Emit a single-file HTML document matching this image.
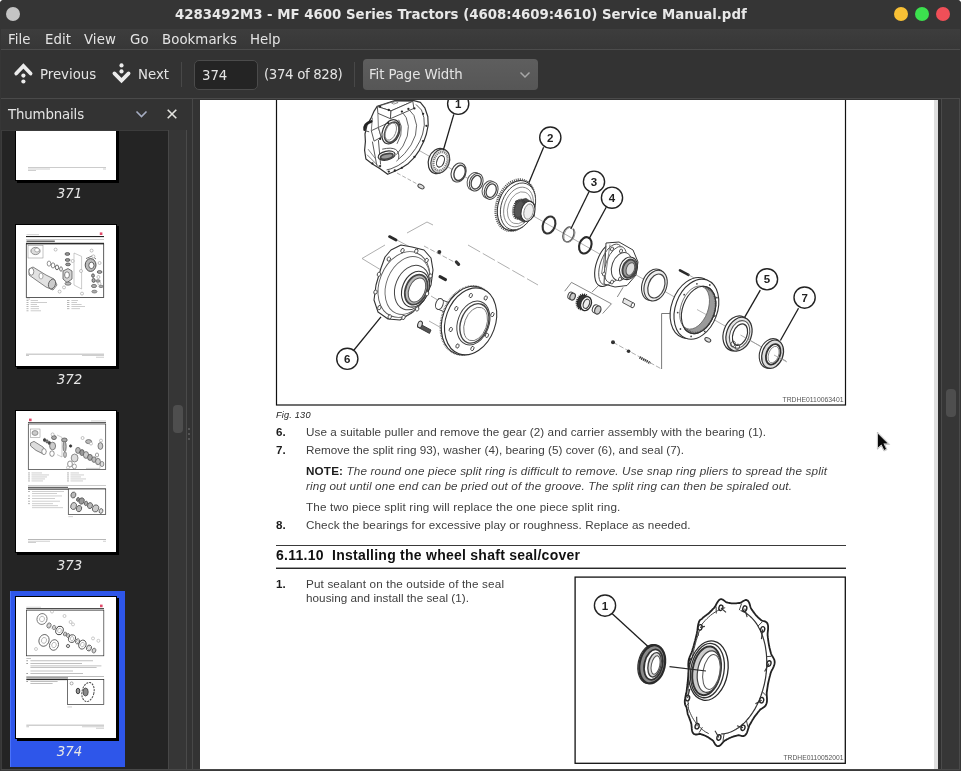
<!DOCTYPE html>
<html lang="en">
<head>
<meta charset="utf-8">
<title>4283492M3 - MF 4600 Series Tractors (4608:4609:4610) Service Manual.pdf</title>
<style>
html,body{margin:0;padding:0;}
body{width:961px;height:771px;overflow:hidden;background:#fff;font-family:"DejaVu Sans","Liberation Sans",sans-serif;font-size:13.33px;color:#e4e4e4;}
#win{will-change:transform;position:absolute;left:0;top:0;width:961px;height:771px;background:#333333;border-radius:4px 4px 0 0;overflow:hidden;}
.abs{position:absolute;}
#titlebar{left:0;top:0;width:961px;height:29px;background:#353535;}
#title{left:175px;top:0;height:29px;line-height:30px;font-weight:bold;font-size:13.33px;color:#e8e8e8;white-space:pre;}
.wbtn{position:absolute;width:14px;height:14px;border-radius:50%;top:7px;}
#menubar{left:1px;top:29px;width:959px;height:20px;background:linear-gradient(#3d3d3d,#373737);border-bottom:1px solid #4c4c4c;}
#menubar span{position:absolute;top:0;line-height:22px;letter-spacing:0.05px;white-space:pre;}
#toolbar{left:1px;top:50px;width:959px;height:48px;background:#333333;border-bottom:1px solid #4a4a4a;}
#toolbar .lbl{position:absolute;top:0;line-height:50px;letter-spacing:-0.03px;white-space:pre;}
.sep{position:absolute;top:12px;width:1px;height:25px;background:#484848;}
#pagebox{left:193px;top:10px;width:62px;height:28px;border:1px solid #4b4b4b;border-radius:5px;background:#242424;box-sizing:content-box;}
#pagebox span{position:absolute;left:7px;letter-spacing:-0.1px;top:0;line-height:30px;}
#combo{left:362px;top:9px;width:175px;height:31px;border-radius:4px;background:linear-gradient(#5e5e5e,#565656);}
#combo span{position:absolute;left:6px;top:0;line-height:31px;letter-spacing:-0.1px;}
/* sidebar */
#sidehead{left:1px;top:99px;width:191px;height:31px;background:#333333;}
#sidehead span{position:absolute;left:7px;top:0;line-height:32px;letter-spacing:-0.15px;}
#thumbs{left:1px;top:130px;width:167px;height:639px;background:#242424;overflow:hidden;border-top:1px solid #3c3c3c;border-left:1px solid #3c3c3c;box-sizing:border-box;}
.tlabel{position:absolute;width:120px;text-align:center;font-style:italic;font-size:13.33px;line-height:16px;color:#e6e6e6;}
.tpage{position:absolute;left:13px;width:100px;height:141px;background:#fff;border:1px solid #000;box-shadow:2px 2px 0 0 #000;}
#sscroll{left:168px;top:130px;width:19px;height:639px;background:#363636;border-left:1px solid #474747;border-right:1px solid #4a4a4a;box-sizing:border-box;}
#sthumb{left:173px;top:405px;width:10px;height:28px;border-radius:4px;background:#4e4e4e;}
.dot{position:absolute;left:188px;width:2px;height:2px;background:#555;}
#docborder{left:192px;top:99px;width:1px;height:670px;background:#484848;}
#page{left:200px;top:100px;width:734px;height:669px;background:#fff;overflow:hidden;color:#3a3a3a;font-family:"Liberation Sans",sans-serif;}
#pshadow{left:934px;top:100px;width:4px;height:669px;background:#dedede;}
#dgap{left:938px;top:100px;width:3px;height:669px;background:#2e2e2e;}
#dscroll{left:941px;top:99px;width:19px;height:671px;background:#363636;border-left:1px solid #4a4a4a;border-right:1px solid #4a4a4a;border-bottom:1px solid #4a4a4a;box-sizing:border-box;}
#dthumb{left:946px;top:389px;width:10px;height:28px;border-radius:4px;background:#4e4e4e;}
#bottom{left:0;top:769px;width:961px;height:2px;background:#3a3a3a;border-top:1px solid #484848;box-sizing:border-box;}
.edge{position:absolute;top:29px;width:1px;height:742px;background:#363636;}
/* doc text */
.t{position:absolute;white-space:pre;font-size:11.5px;line-height:14px;color:#3c3c3c;}
.b{font-weight:bold;color:#1a1a1a;}
.i{font-style:italic;}
.rule{position:absolute;left:76px;width:570px;height:1px;background:#222;}
</style>
</head>
<body>
<div id="win">
  <div id="titlebar" class="abs"></div>
  <div id="title" class="abs">4283492M3 - MF 4600 Series Tractors (4608:4609:4610) Service Manual.pdf</div>
  <div class="wbtn" style="left:6px;background:#c4c4c4"></div>
  <div class="wbtn" style="left:894px;background:#f8c035"></div>
  <div class="wbtn" style="left:915px;background:#3ce04e"></div>
  <div class="wbtn" style="left:936px;background:#f04f58"></div>

  <div id="menubar" class="abs">
    <span style="left:7px">File</span><span style="left:44px">Edit</span><span style="left:83px">View</span><span style="left:129px">Go</span><span style="left:161px">Bookmarks</span><span style="left:249px">Help</span>
  </div>

  <div id="toolbar" class="abs">
    <svg class="abs" style="left:-1px;top:-50px" width="140" height="98" viewBox="0 0 140 98"><g fill="none" stroke="#ececec" stroke-width="3.7" stroke-linecap="round" stroke-linejoin="miter"><path d="M16.2 73.6 L23.4 66 L30.6 73.6"/><path d="M114.4 73.4 L121.5 80.6 L128.6 73.4"/></g><g fill="#ececec"><circle cx="23.4" cy="75.6" r="2.1"/><circle cx="23.4" cy="81.5" r="2.1"/><circle cx="121.5" cy="65.4" r="2.1"/><circle cx="121.5" cy="71.4" r="2.1"/></g></svg>
    <span class="lbl" style="left:39px">Previous</span>
    <span class="lbl" style="left:137px">Next</span>
    <div class="sep" style="left:180px"></div>
    <div id="pagebox" class="abs"><span>374</span></div>
    <span class="lbl" style="left:263px;letter-spacing:-0.35px">(374 of 828)</span>
    <div class="sep" style="left:353px"></div>
    <div id="combo" class="abs"><span>Fit Page Width</span>
      <svg class="abs" style="left:156px;top:11px" width="12" height="10" viewBox="0 0 12 10"><path d="M1.5 2.5 L6 7 L10.5 2.5" fill="none" stroke="#a8a8a8" stroke-width="1.5"/></svg>
    </div>
  </div>

  <div id="sidehead" class="abs"><span>Thumbnails</span>
    <svg class="abs" style="left:134px;top:9px" width="13" height="12" viewBox="0 0 13 12"><path d="M1.5 3.5 L6.5 8.5 L11.5 3.5" fill="none" stroke="#a6adc2" stroke-width="1.6"/></svg>
    <svg class="abs" style="left:165px;top:9px" width="12" height="12" viewBox="0 0 12 12"><path d="M1.7 1.7 L10.3 10.3 M10.3 1.7 L1.7 10.3" fill="none" stroke="#e4e4e0" stroke-width="1.6"/></svg>
  </div>
  <div id="thumbs" class="abs">
<div class="abs" style="left:8px;top:460px;width:115px;height:176px;background:#2e56ea;box-shadow:inset 1px 0 0 #4a72fa"></div>
<div class="tpage" style="top:-93px"><svg class="abs" style="left:0;top:0" width="100" height="141" viewBox="0 0 100 141">
<rect x="12" y="128" width="78" height="0.6" fill="#aaa"/>
<rect x="12" y="129.6" width="22" height="0.8" fill="#c4c4c4"/>
<rect x="12" y="131" width="8" height="0.8" fill="#c4c4c4"/>
<rect x="87" y="129.6" width="3" height="0.8" fill="#c4c4c4"/>
</svg></div>
<div class="tlabel" style="left:7.5px;top:55px">371</div>
<div class="tpage" style="top:93px"><svg class="abs" style="left:0;top:0" width="100" height="141" viewBox="0 0 100 141">
<rect x="83.8" y="7.4" width="2.6" height="2.6" fill="#e24a6a"/>
<rect x="10.5" y="9.4" width="12.5" height="0.7" fill="#c0c0c0"/>
<rect x="10" y="11" width="78" height="1.1" fill="#222"/>
<rect x="10" y="14.3" width="78" height="0.5" fill="#999"/>
<rect x="10.5" y="15.6" width="28.299999999999997" height="1.2" fill="#444"/>
<rect x="10" y="17.8" width="78" height="1.1" fill="#111"/>
<rect x="10.3" y="19" width="77.4" height="53.4" fill="#fff" stroke="#333" stroke-width="0.8"/>
<rect x="12" y="20.4" width="15" height="12.6" fill="#fff" stroke="#888" stroke-width="0.5"/>
<ellipse cx="19.5" cy="26" rx="4.6" ry="3.6" fill="#ddd" stroke="#777" stroke-width="0.8"/>
<ellipse cx="21" cy="25" rx="2.4" ry="2" fill="#fff" stroke="#888" stroke-width="0.6"/>
<path d="M13 44 L17 42 L30 50 L38 54 L41 60 L37 65 L30 62 L20 55 L13 50 Z" fill="#e2e2e2" stroke="#666" stroke-width="0.8"/>
<ellipse cx="15.4" cy="46.6" rx="2.4" ry="3.6" fill="#fff" stroke="#666" stroke-width="0.7"/>
<ellipse cx="36" cy="59" rx="3.4" ry="5" fill="#ccc" stroke="#555" stroke-width="0.8" transform="rotate(20 36 59)"/>
<ellipse cx="25" cy="51" rx="2" ry="3" fill="#fff" stroke="#777" stroke-width="0.6"/>
<ellipse cx="33" cy="38.6" rx="1.8" ry="2.6" fill="none" stroke="#777" stroke-width="0.8"/>
<ellipse cx="37" cy="40.4" rx="1.8" ry="2.6" fill="none" stroke="#666" stroke-width="0.8"/>
<ellipse cx="41" cy="42.4" rx="1.6" ry="2.4" fill="none" stroke="#444" stroke-width="0.8"/>
<ellipse cx="45" cy="44" rx="1.4" ry="2.2" fill="none" stroke="#555" stroke-width="0.8"/>
<path d="M47 46 L52 43.6 L56 46 L56 54 L51 57.6 L47 54 Z" fill="#d4d4d4" stroke="#555" stroke-width="0.8"/>
<ellipse cx="51" cy="50" rx="2.4" ry="3.2" fill="#fff" stroke="#555" stroke-width="0.7"/>
<ellipse cx="52" cy="58.6" rx="3" ry="1.6" fill="#bbb" stroke="#555" stroke-width="0.7"/>
<ellipse cx="51.4" cy="29" rx="2.4" ry="1.4" fill="#999" stroke="#444" stroke-width="0.7"/>
<ellipse cx="51.6" cy="35" rx="2.4" ry="1.4" fill="#999" stroke="#444" stroke-width="0.7"/>
<ellipse cx="52" cy="39.4" rx="2.4" ry="1.4" fill="#999" stroke="#444" stroke-width="0.7"/>
<path d="M58 28 L65.6 31.4 L65.6 64 L58 60 Z" fill="none" stroke="#999" stroke-width="0.5"/>
<ellipse cx="74.6" cy="40" rx="5.4" ry="6.4" fill="#bbb" stroke="#444" stroke-width="0.9"/>
<ellipse cx="75.4" cy="40.4" rx="2.6" ry="3.2" fill="#fff" stroke="#444" stroke-width="0.8"/>
<path d="M70 33.6 L76 31 L80 34" fill="none" stroke="#555" stroke-width="0.8"/>
<ellipse cx="77" cy="50.6" rx="1.4" ry="1.8" fill="#aaa" stroke="#333" stroke-width="0.7"/>
<ellipse cx="77.6" cy="55.4" rx="1.6" ry="2" fill="#aaa" stroke="#333" stroke-width="0.7"/>
<ellipse cx="78" cy="61" rx="2.6" ry="1.6" fill="#aaa" stroke="#555" stroke-width="0.7"/>
<ellipse cx="78.4" cy="66.6" rx="2.6" ry="1.4" fill="#aaa" stroke="#666" stroke-width="0.7"/>
<ellipse cx="83.6" cy="47" rx="2.4" ry="1.4" fill="#aaa" stroke="#444" stroke-width="0.7"/>
<ellipse cx="82" cy="56" rx="2.2" ry="1.3" fill="#aaa" stroke="#666" stroke-width="0.7"/>
<ellipse cx="85" cy="61.4" rx="2" ry="1.2" fill="#aaa" stroke="#666" stroke-width="0.7"/>
<circle cx="39.6" cy="24.6" r="1.5" fill="#fff" stroke="#888" stroke-width="0.5"/>
<circle cx="56.6" cy="36" r="1.5" fill="#fff" stroke="#888" stroke-width="0.5"/>
<circle cx="75.6" cy="25.6" r="1.5" fill="#fff" stroke="#888" stroke-width="0.5"/>
<circle cx="77.4" cy="31.4" r="1.5" fill="#fff" stroke="#888" stroke-width="0.5"/>
<circle cx="83.6" cy="38" r="1.5" fill="#fff" stroke="#888" stroke-width="0.5"/>
<circle cx="65" cy="46" r="1.5" fill="#fff" stroke="#888" stroke-width="0.5"/>
<circle cx="82.4" cy="52" r="1.5" fill="#fff" stroke="#888" stroke-width="0.5"/>
<circle cx="83.4" cy="58.6" r="1.5" fill="#fff" stroke="#888" stroke-width="0.5"/>
<circle cx="43.6" cy="66.6" r="1.5" fill="#fff" stroke="#888" stroke-width="0.5"/>
<circle cx="66" cy="68.6" r="1.5" fill="#fff" stroke="#888" stroke-width="0.5"/>
<circle cx="48" cy="62.4" r="1.5" fill="#fff" stroke="#888" stroke-width="0.5"/>
<rect x="10.5" y="73.6" width="3.5" height="0.7" fill="#aaa"/>
<rect x="10.5" y="75.0" width="2.0" height="0.7" fill="#999"/>
<rect x="14.6" y="75.0" width="7.4" height="0.7" fill="#b8b8b8"/>
<rect x="10.5" y="77.1" width="2.0" height="0.7" fill="#999"/>
<rect x="14.6" y="77.1" width="16.4" height="0.7" fill="#b8b8b8"/>
<rect x="10.5" y="79.2" width="2.0" height="0.7" fill="#999"/>
<rect x="14.6" y="79.2" width="6.4" height="0.7" fill="#b8b8b8"/>
<rect x="10.5" y="81.3" width="2.0" height="0.7" fill="#999"/>
<rect x="14.6" y="81.3" width="8.4" height="0.7" fill="#b8b8b8"/>
<rect x="10.5" y="83.4" width="2.0" height="0.7" fill="#999"/>
<rect x="14.6" y="83.4" width="8.4" height="0.7" fill="#b8b8b8"/>
<rect x="10.5" y="85.5" width="2.0" height="0.7" fill="#999"/>
<rect x="14.6" y="85.5" width="10.4" height="0.7" fill="#b8b8b8"/>
<rect x="51" y="75.0" width="2.3999999999999986" height="0.7" fill="#999"/>
<rect x="55.4" y="75.0" width="6.600000000000001" height="0.7" fill="#b8b8b8"/>
<rect x="51" y="77.1" width="2.3999999999999986" height="0.7" fill="#999"/>
<rect x="55.4" y="77.1" width="5.600000000000001" height="0.7" fill="#b8b8b8"/>
<rect x="51" y="79.2" width="2.3999999999999986" height="0.7" fill="#999"/>
<rect x="55.4" y="79.2" width="10.199999999999996" height="0.7" fill="#b8b8b8"/>
<rect x="51" y="81.3" width="2.3999999999999986" height="0.7" fill="#999"/>
<rect x="55.4" y="81.3" width="13.600000000000001" height="0.7" fill="#b8b8b8"/>
<rect x="51" y="83.4" width="2.3999999999999986" height="0.7" fill="#999"/>
<rect x="55.4" y="83.4" width="8.600000000000001" height="0.7" fill="#b8b8b8"/>
<rect x="10" y="128.8" width="78" height="0.6" fill="#888"/>
<rect x="10" y="130.2" width="3" height="0.8" fill="#bbb"/>
<rect x="66" y="130.2" width="22" height="0.8" fill="#c4c4c4"/>
<rect x="80" y="131.8" width="8" height="0.8" fill="#c4c4c4"/>
</svg></div>
<div class="tlabel" style="left:7.5px;top:241px">372</div>
<div class="tpage" style="top:279px"><svg class="abs" style="left:0;top:0" width="100" height="141" viewBox="0 0 100 141">
<rect x="13" y="7.6" width="2.6" height="2.6" fill="#e24a6a"/>
<rect x="75" y="9.6" width="15" height="0.7" fill="#c0c0c0"/>
<rect x="12" y="11.2" width="78" height="0.9" fill="#333"/>
<rect x="12.3" y="13" width="77.4" height="45.6" fill="#fff" stroke="#333" stroke-width="0.7"/>
<rect x="14.4" y="18" width="9.6" height="8.6" fill="#fff" stroke="#888" stroke-width="0.5"/>
<ellipse cx="19" cy="22" rx="3" ry="2.4" fill="#ccc" stroke="#777" stroke-width="0.7"/>
<path d="M14.6 32 L18 30.4 L27 36 L30 40.6 L27.4 43 L20 39.4 L14.6 35 Z" fill="#ddd" stroke="#666" stroke-width="0.8"/>
<ellipse cx="28" cy="40.6" rx="2.2" ry="3" fill="#fff" stroke="#666" stroke-width="0.7"/>
<ellipse cx="28.6" cy="29" rx="1.2" ry="1.6" fill="#444" stroke="#333" stroke-width="0.7"/>
<ellipse cx="31" cy="30.4" rx="1.2" ry="1.6" fill="#888" stroke="#444" stroke-width="0.7"/>
<ellipse cx="33.4" cy="32" rx="1.2" ry="1.6" fill="#444" stroke="#333" stroke-width="0.7"/>
<ellipse cx="36.6" cy="35" rx="3" ry="3.8" fill="#ccc" stroke="#555" stroke-width="0.7"/>
<ellipse cx="38" cy="26.6" rx="2.4" ry="2" fill="#aaa" stroke="#444" stroke-width="0.7"/>
<ellipse cx="36" cy="42.6" rx="2.2" ry="2.8" fill="#fff" stroke="#666" stroke-width="0.7"/>
<ellipse cx="48.4" cy="29" rx="2.8" ry="2" fill="#aaa" stroke="#444" stroke-width="0.7"/>
<ellipse cx="48.6" cy="35.6" rx="1.6" ry="5" fill="#bbb" stroke="#555" stroke-width="0.7"/>
<ellipse cx="49" cy="43.6" rx="1.4" ry="3" fill="#ccc" stroke="#666" stroke-width="0.7"/>
<ellipse cx="54.6" cy="35" rx="1.2" ry="1.2" fill="#333" stroke="#333" stroke-width="0.7"/>
<ellipse cx="58.6" cy="47" rx="3.4" ry="4" fill="#ddd" stroke="#666" stroke-width="0.7"/>
<ellipse cx="54" cy="53" rx="2.4" ry="3" fill="#fff" stroke="#666" stroke-width="0.7"/>
<ellipse cx="58.4" cy="55.4" rx="2" ry="2.4" fill="#fff" stroke="#777" stroke-width="0.7"/>
<ellipse cx="62" cy="39.4" rx="2.4" ry="3" fill="#bbb" stroke="#555" stroke-width="0.7"/>
<ellipse cx="66" cy="41.6" rx="2.2" ry="3" fill="#999" stroke="#444" stroke-width="0.7"/>
<ellipse cx="70" cy="44" rx="2.6" ry="3.4" fill="#ccc" stroke="#555" stroke-width="0.7"/>
<ellipse cx="74" cy="46.4" rx="2.4" ry="3" fill="#aaa" stroke="#444" stroke-width="0.7"/>
<ellipse cx="78" cy="48.6" rx="2.2" ry="2.8" fill="#bbb" stroke="#555" stroke-width="0.7"/>
<ellipse cx="82" cy="50.6" rx="2.4" ry="3.2" fill="#ccc" stroke="#555" stroke-width="0.7"/>
<ellipse cx="86" cy="53" rx="1.8" ry="2.6" fill="#ddd" stroke="#666" stroke-width="0.7"/>
<ellipse cx="72.6" cy="30.6" rx="3" ry="2" fill="#bbb" stroke="#555" stroke-width="0.7"/>
<ellipse cx="84.4" cy="35" rx="2.4" ry="3.4" fill="#ccc" stroke="#555" stroke-width="0.7"/>
<ellipse cx="81" cy="44" rx="1.6" ry="2" fill="#fff" stroke="#777" stroke-width="0.7"/>
<path d="M41 24 L46 26.4 L46 46 L41 43.6" fill="none" stroke="#999" stroke-width="0.5"/>
<path d="M62 42 L84 54 L84 57.4 L70 57.4" fill="none" stroke="#999" stroke-width="0.5"/>
<circle cx="36.6" cy="23.4" r="1.5" fill="#fff" stroke="#888" stroke-width="0.5"/>
<circle cx="66.6" cy="27" r="1.5" fill="#fff" stroke="#888" stroke-width="0.5"/>
<circle cx="75" cy="32.6" r="1.5" fill="#fff" stroke="#888" stroke-width="0.5"/>
<circle cx="85" cy="29.6" r="1.5" fill="#fff" stroke="#888" stroke-width="0.5"/>
<circle cx="52" cy="56.6" r="1.5" fill="#fff" stroke="#888" stroke-width="0.5"/>
<rect x="12" y="61.6" width="2" height="0.7" fill="#999"/>
<rect x="15.5" y="61.6" width="10.5" height="0.7" fill="#bbb"/>
<rect x="51" y="61.6" width="2" height="0.7" fill="#999"/>
<rect x="54.5" y="61.6" width="8.5" height="0.7" fill="#bbb"/>
<rect x="12" y="63.6" width="2" height="0.7" fill="#999"/>
<rect x="15.5" y="63.6" width="17.5" height="0.7" fill="#bbb"/>
<rect x="51" y="63.6" width="2" height="0.7" fill="#999"/>
<rect x="54.5" y="63.6" width="13.5" height="0.7" fill="#bbb"/>
<rect x="12" y="65.6" width="2" height="0.7" fill="#999"/>
<rect x="15.5" y="65.6" width="15.5" height="0.7" fill="#bbb"/>
<rect x="51" y="65.6" width="2" height="0.7" fill="#999"/>
<rect x="54.5" y="65.6" width="10.5" height="0.7" fill="#bbb"/>
<rect x="12" y="67.6" width="2" height="0.7" fill="#999"/>
<rect x="15.5" y="67.6" width="13.5" height="0.7" fill="#bbb"/>
<rect x="51" y="67.6" width="2" height="0.7" fill="#999"/>
<rect x="54.5" y="67.6" width="15.5" height="0.7" fill="#bbb"/>
<rect x="12" y="69.6" width="2" height="0.7" fill="#999"/>
<rect x="15.5" y="69.6" width="11.5" height="0.7" fill="#bbb"/>
<rect x="51" y="69.6" width="2" height="0.7" fill="#999"/>
<rect x="54.5" y="69.6" width="12.5" height="0.7" fill="#bbb"/>
<rect x="12" y="74.4" width="78" height="0.5" fill="#999"/>
<rect x="12" y="75.8" width="40" height="1.1" fill="#555"/>
<rect x="12" y="77.6" width="78" height="1" fill="#222"/>
<rect x="52.3" y="78" width="37.4" height="25.4" fill="#fff" stroke="#333" stroke-width="0.7"/>
<ellipse cx="57.4" cy="84" rx="2.4" ry="3" fill="#bbb" stroke="#555" stroke-width="0.8" transform="rotate(20 57.4 84)"/>
<ellipse cx="62" cy="88.4" rx="1.4" ry="2" fill="#888" stroke="#555" stroke-width="0.8" transform="rotate(20 62 88.4)"/>
<ellipse cx="65.6" cy="90" rx="2.6" ry="3.2" fill="#999" stroke="#555" stroke-width="0.8" transform="rotate(20 65.6 90)"/>
<ellipse cx="70" cy="92.4" rx="1.6" ry="2.2" fill="#aaa" stroke="#555" stroke-width="0.8" transform="rotate(20 70 92.4)"/>
<ellipse cx="74" cy="94.6" rx="2.4" ry="3" fill="#bbb" stroke="#555" stroke-width="0.8" transform="rotate(20 74 94.6)"/>
<ellipse cx="79.6" cy="97.4" rx="3" ry="3.6" fill="#ccc" stroke="#555" stroke-width="0.8" transform="rotate(20 79.6 97.4)"/>
<ellipse cx="85" cy="100" rx="1.8" ry="2.4" fill="#ddd" stroke="#555" stroke-width="0.8" transform="rotate(20 85 100)"/>
<ellipse cx="57.6" cy="95" rx="2.8" ry="3.6" fill="#ccc" stroke="#555" stroke-width="0.8" transform="rotate(20 57.6 95)"/>
<ellipse cx="63" cy="97.6" rx="2.6" ry="3.2" fill="#bbb" stroke="#555" stroke-width="0.8" transform="rotate(20 63 97.6)"/>
<rect x="12" y="80" width="2" height="0.7" fill="#999"/>
<rect x="16" y="80" width="32" height="0.7" fill="#bbb"/>
<rect x="16" y="82" width="25" height="0.7" fill="#bbb"/>
<rect x="12" y="84.6" width="2" height="0.7" fill="#999"/>
<rect x="16" y="84.6" width="30" height="0.7" fill="#bbb"/>
<rect x="12" y="87.2" width="2" height="0.7" fill="#999"/>
<rect x="16" y="87.2" width="23" height="0.7" fill="#bbb"/>
<rect x="12" y="89.8" width="2" height="0.7" fill="#999"/>
<rect x="16" y="89.8" width="28" height="0.7" fill="#bbb"/>
<rect x="12" y="92.4" width="2" height="0.7" fill="#999"/>
<rect x="16" y="92.4" width="21" height="0.7" fill="#bbb"/>
<rect x="16" y="94.4" width="26" height="0.7" fill="#bbb"/>
<rect x="16" y="96.4" width="31" height="0.7" fill="#bbb"/>
<rect x="52.3" y="105.4" width="4.700000000000003" height="0.7" fill="#bbb"/>
<rect x="12" y="128.2" width="78" height="0.6" fill="#888"/>
<rect x="12" y="129.8" width="22" height="0.8" fill="#c4c4c4"/>
<rect x="12" y="131.2" width="8" height="0.8" fill="#c4c4c4"/>
<rect x="87" y="129.8" width="3" height="0.8" fill="#c4c4c4"/>
</svg></div>
<div class="tlabel" style="left:7.5px;top:427px">373</div>
<div class="tpage" style="top:465px"><svg class="abs" style="left:0;top:0" width="100" height="141" viewBox="0 0 100 141">
<rect x="84" y="7.6" width="2.6" height="2.6" fill="#e24a6a"/>
<rect x="10.3" y="9.8" width="14.7" height="0.7" fill="#c0c0c0"/>
<rect x="10.3" y="11.2" width="77.7" height="1" fill="#222"/>
<rect x="10.6" y="13.2" width="77.2" height="45.6" fill="#fff" stroke="#333" stroke-width="0.7"/>
<ellipse cx="26" cy="22" rx="5" ry="5.5" fill="none" stroke="#777" stroke-width="0.9" transform="rotate(20 26 22)"/>
<ellipse cx="26" cy="22" rx="2.5" ry="2.75" fill="none" stroke="#999" stroke-width="0.6" transform="rotate(20 26 22)"/>
<ellipse cx="33" cy="28.5" rx="2" ry="2.6" fill="none" stroke="#666" stroke-width="0.9" transform="rotate(20 33 28.5)"/>
<ellipse cx="33" cy="28.5" rx="1.0" ry="1.3" fill="none" stroke="#999" stroke-width="0.6" transform="rotate(20 33 28.5)"/>
<ellipse cx="38" cy="30.5" rx="1.6" ry="2.2" fill="none" stroke="#777" stroke-width="0.9" transform="rotate(20 38 30.5)"/>
<ellipse cx="38" cy="30.5" rx="0.8" ry="1.1" fill="none" stroke="#999" stroke-width="0.6" transform="rotate(20 38 30.5)"/>
<ellipse cx="43.5" cy="33.5" rx="3.6" ry="4.4" fill="none" stroke="#444" stroke-width="0.9" transform="rotate(20 43.5 33.5)"/>
<ellipse cx="43.5" cy="33.5" rx="1.8" ry="2.2" fill="none" stroke="#999" stroke-width="0.6" transform="rotate(20 43.5 33.5)"/>
<ellipse cx="49" cy="37" rx="1.4" ry="2" fill="none" stroke="#666" stroke-width="0.9" transform="rotate(20 49 37)"/>
<ellipse cx="49" cy="37" rx="0.7" ry="1.0" fill="none" stroke="#999" stroke-width="0.6" transform="rotate(20 49 37)"/>
<ellipse cx="52" cy="38.5" rx="1.4" ry="2" fill="none" stroke="#666" stroke-width="0.9" transform="rotate(20 52 38.5)"/>
<ellipse cx="52" cy="38.5" rx="0.7" ry="1.0" fill="none" stroke="#999" stroke-width="0.6" transform="rotate(20 52 38.5)"/>
<ellipse cx="56" cy="41.6" rx="3.4" ry="4" fill="none" stroke="#555" stroke-width="0.9" transform="rotate(20 56 41.6)"/>
<ellipse cx="56" cy="41.6" rx="1.7" ry="2.0" fill="none" stroke="#999" stroke-width="0.6" transform="rotate(20 56 41.6)"/>
<ellipse cx="61.6" cy="44.4" rx="2" ry="2.6" fill="none" stroke="#666" stroke-width="0.9" transform="rotate(20 61.6 44.4)"/>
<ellipse cx="61.6" cy="44.4" rx="1.0" ry="1.3" fill="none" stroke="#999" stroke-width="0.6" transform="rotate(20 61.6 44.4)"/>
<ellipse cx="66.4" cy="47.6" rx="3.6" ry="4.6" fill="none" stroke="#555" stroke-width="0.9" transform="rotate(20 66.4 47.6)"/>
<ellipse cx="66.4" cy="47.6" rx="1.8" ry="2.3" fill="none" stroke="#999" stroke-width="0.6" transform="rotate(20 66.4 47.6)"/>
<ellipse cx="73" cy="51" rx="2.4" ry="3" fill="none" stroke="#555" stroke-width="0.9" transform="rotate(20 73 51)"/>
<ellipse cx="73" cy="51" rx="1.2" ry="1.5" fill="none" stroke="#999" stroke-width="0.6" transform="rotate(20 73 51)"/>
<ellipse cx="78" cy="53.6" rx="1.8" ry="2.4" fill="none" stroke="#666" stroke-width="0.9" transform="rotate(20 78 53.6)"/>
<ellipse cx="78" cy="53.6" rx="0.9" ry="1.2" fill="none" stroke="#999" stroke-width="0.6" transform="rotate(20 78 53.6)"/>
<ellipse cx="28" cy="43.4" rx="5" ry="6" fill="none" stroke="#666" stroke-width="0.9" transform="rotate(20 28 43.4)"/>
<ellipse cx="28" cy="43.4" rx="2.5" ry="3.0" fill="none" stroke="#999" stroke-width="0.6" transform="rotate(20 28 43.4)"/>
<ellipse cx="38" cy="48" rx="4.4" ry="5.4" fill="none" stroke="#666" stroke-width="0.9" transform="rotate(20 38 48)"/>
<ellipse cx="38" cy="48" rx="2.2" ry="2.7" fill="none" stroke="#999" stroke-width="0.6" transform="rotate(20 38 48)"/>
<ellipse cx="52" cy="49" rx="1.6" ry="1.6" fill="none" stroke="#444" stroke-width="0.9" transform="rotate(20 52 49)"/>
<ellipse cx="52" cy="49" rx="0.8" ry="0.8" fill="none" stroke="#999" stroke-width="0.6" transform="rotate(20 52 49)"/>
<circle cx="36" cy="14.6" r="1.5" fill="none" stroke="#999" stroke-width="0.5"/>
<circle cx="48.5" cy="19" r="1.5" fill="none" stroke="#999" stroke-width="0.5"/>
<circle cx="54.6" cy="25" r="1.5" fill="none" stroke="#999" stroke-width="0.5"/>
<circle cx="57" cy="27.4" r="1.5" fill="none" stroke="#999" stroke-width="0.5"/>
<circle cx="77" cy="41.4" r="1.5" fill="none" stroke="#999" stroke-width="0.5"/>
<circle cx="82.4" cy="43.8" r="1.5" fill="none" stroke="#999" stroke-width="0.5"/>
<circle cx="20" cy="52" r="1.5" fill="none" stroke="#999" stroke-width="0.5"/>
<rect x="10.3" y="61.2" width="4.699999999999999" height="0.7" fill="#aaa"/>
<rect x="10.3" y="63.4" width="1.6999999999999993" height="0.8" fill="#888"/>
<rect x="14.4" y="63.4" width="62.6" height="0.8" fill="#b0b0b0"/>
<rect x="10.3" y="66" width="1.6999999999999993" height="0.8" fill="#888"/>
<rect x="14.4" y="66" width="51.6" height="0.8" fill="#b0b0b0"/>
<rect x="14.4" y="68.5" width="71.0" height="0.8" fill="#b4b4b4"/>
<rect x="14.4" y="70" width="66.19999999999999" height="0.8" fill="#b4b4b4"/>
<rect x="14.4" y="73.6" width="42.6" height="0.8" fill="#b4b4b4"/>
<rect x="10.3" y="76.2" width="1.6999999999999993" height="0.8" fill="#888"/>
<rect x="14.4" y="76.2" width="52.6" height="0.8" fill="#b0b0b0"/>
<rect x="10.3" y="79.3" width="77.7" height="0.5" fill="#777"/>
<rect x="10.3" y="80.5" width="41.7" height="0.9" fill="#444"/>
<rect x="10.3" y="82.1" width="77.7" height="1" fill="#111"/>
<rect x="51.4" y="82.4" width="36.4" height="25.2" fill="#fff" stroke="#333" stroke-width="0.7"/>
<ellipse cx="72" cy="95" rx="6" ry="9.6" fill="none" stroke="#444" stroke-width="1" stroke-dasharray="2 1" transform="rotate(12 72 95)"/>
<ellipse cx="69.6" cy="95" rx="2.6" ry="4" fill="#888" stroke="#444" stroke-width="0.8"/>
<ellipse cx="62" cy="94" rx="1.8" ry="2.8" fill="#999" stroke="#333" stroke-width="0.9"/>
<circle cx="55.6" cy="86.4" r="1.5" fill="none" stroke="#777" stroke-width="0.6"/>
<rect x="10.3" y="84" width="1.6999999999999993" height="0.8" fill="#888"/>
<rect x="14.4" y="84" width="27.200000000000003" height="0.8" fill="#b0b0b0"/>
<rect x="14.4" y="86" width="22.200000000000003" height="0.8" fill="#b0b0b0"/>
<rect x="51.4" y="109.6" width="4.600000000000001" height="0.7" fill="#bbb"/>
<rect x="10.3" y="127.8" width="77.7" height="0.6" fill="#888"/>
<rect x="10.3" y="129.4" width="2.6999999999999993" height="0.8" fill="#bbb"/>
<rect x="66" y="129.4" width="22" height="0.8" fill="#c4c4c4"/>
<rect x="80" y="130.8" width="8" height="0.8" fill="#c4c4c4"/>
</svg></div>
<div class="tlabel" style="left:7.5px;top:613px">374</div>
  </div>
  <div id="sscroll" class="abs"></div>
  <div id="sthumb" class="abs"></div>
  <div class="dot" style="top:428px"></div><div class="dot" style="top:433px"></div><div class="dot" style="top:438px"></div>
  <div id="docborder" class="abs"></div>

  <div id="page" class="abs">
<svg class="abs" style="left:0;top:0" width="734" height="669" viewBox="200 100 734 669">
<rect x="276.5" y="90.5" width="569" height="314.5" fill="#fff" stroke="#111" stroke-width="1.2"/>
<filter id="soft" x="-5%" y="-5%" width="110%" height="110%"><feGaussianBlur stdDeviation="0.45"/></filter>
<g filter="url(#soft)">
<line x1="401" y1="140" x2="786" y2="361" stroke="#9a9a9a" stroke-width="0.8"/>
<line x1="397" y1="173" x2="419" y2="185" stroke="#9a9a9a" stroke-width="0.8" stroke-dasharray="4 2"/>
<path d="M407 233 L427 222 L433 225" fill="none" stroke="#9a9a9a" stroke-width="0.8" stroke-linejoin="round"/>
<path d="M385 245 L362 258.5 L381 270" fill="none" stroke="#9a9a9a" stroke-width="0.8" stroke-linejoin="round"/>
<line x1="468" y1="245" x2="538" y2="285" stroke="#9a9a9a" stroke-width="0.8" stroke-dasharray="14 3"/>
<line x1="431" y1="296" x2="446" y2="305" stroke="#9a9a9a" stroke-width="0.8"/>
<line x1="445" y1="330" x2="429" y2="321" stroke="#9a9a9a" stroke-width="0.8"/>
<line x1="424" y1="246" x2="458" y2="264" stroke="#9a9a9a" stroke-width="0.8" stroke-dasharray="5 2"/>
<line x1="395" y1="239" x2="410" y2="247" stroke="#9a9a9a" stroke-width="0.8"/>
<path d="M564.7 291.2 L571.5 282.4 L611.4 303.8 L602.7 313.5" fill="none" stroke="#6a6a6a" stroke-width="0.8" stroke-linejoin="round"/>
<path d="M592 292.1 L602.7 281.4" fill="none" stroke="#6a6a6a" stroke-width="0.8" stroke-linejoin="round"/>
<path d="M617.3 297 L623.1 287.3" fill="none" stroke="#6a6a6a" stroke-width="0.8" stroke-linejoin="round"/>
<path d="M669.8 313.5 L661.6 313.5 L661.6 369" fill="none" stroke="#6a6a6a" stroke-width="0.9" stroke-linejoin="round"/>
<line x1="613" y1="342.3" x2="661.6" y2="369" stroke="#9a9a9a" stroke-width="0.8" stroke-dasharray="5 2"/>
<clipPath id="cpv"><rect x="276" y="100" width="570" height="305"/></clipPath>
<g clip-path="url(#cpv)">
<path d="M377.3 106.2 L395.3 100.4 L413.9 100.7 L420.4 102.4 L424.8 107.8 L427.8 116.5 L428.2 125.2 L426.4 134 L423.7 141.6 L419.3 150.3 L414.4 157.4 L408.4 163.4 L401.9 167.8 L394.8 171.2 L387.7 174.3 L380.1 168.8 L372.4 163.9 L365.9 159 L364.6 150.3 L365.4 141.6 L365 134 L367 125.2 L371.3 117.6 L374.1 111.1 Z" fill="#fff" stroke="#333" stroke-width="1.2" stroke-linejoin="round"/>
<path d="M416 104.5 L421.5 110 L423.9 117.6 L424.3 125.2 L422.6 134 L419.9 141.1 L415.5 148.7 L410.6 155.2 L404.6 161.2 L398.1 165.6 L391 168.8 L386.6 169.9" fill="none" stroke="#444" stroke-width="0.9" stroke-linejoin="round"/>
<path d="M401.9 111.6 L406.2 117.6 L408.4 126.3 L407.3 136.1 L403 146 L396.4 154.7" fill="none" stroke="#555" stroke-width="0.9"/>
<path d="M408.4 108.9 L413.9 115.4 L416.6 125.2 L415.5 135.1 L411.1 144.9 L404.6 153.6 L396.4 161.2" fill="none" stroke="#555" stroke-width="0.9"/>
<path d="M398.6 119.8 L401.3 126.3 L400.8 135.1 L397 143.8" fill="none" stroke="#555" stroke-width="0.9"/>
<path d="M377.3 106.5 L394.8 101.1 L412.8 101.3 L391 110.9 Z" fill="#fff" stroke="#444" stroke-width="0.9" stroke-linejoin="round"/>
<path d="M377.3 106.5 L391 110.9 L390.4 118.7 L377.9 113.3 Z" fill="#fff" stroke="#444" stroke-width="0.9" stroke-linejoin="round"/>
<path d="M391 110.9 L412.8 101.3 L413.9 108.4 L390.4 118.7 Z" fill="#fff" stroke="#444" stroke-width="0.9" stroke-linejoin="round"/>
<path d="M391.5 102.9 L395.9 101.5 L398.1 102.6 L393.7 104.1 Z" fill="#fff" stroke="#666" stroke-width="0.7" stroke-linejoin="round"/>
<path d="M371.3 130.7 L378.4 127.4 L381.2 137.2 L374.1 141.1 Z" fill="#fff" stroke="#444" stroke-width="0.9" stroke-linejoin="round"/>
<path d="M378.4 127.4 L387.7 123.1 L389.9 130.7 L381.2 137.2 Z" fill="#fff" stroke="#555" stroke-width="0.9" stroke-linejoin="round"/>
<line x1="372.4" y1="141.6" x2="376.8" y2="165.6" stroke="#444" stroke-width="0.9"/>
<line x1="378.4" y1="140" x2="380.6" y2="164.5" stroke="#444" stroke-width="0.9"/>
<line x1="368.1" y1="149.2" x2="375.7" y2="159" stroke="#666" stroke-width="0.8"/>
<line x1="367" y1="154.7" x2="380.1" y2="167.8" stroke="#666" stroke-width="0.8"/>
<line x1="372.4" y1="117.6" x2="371.3" y2="130.7" stroke="#555" stroke-width="0.8"/>
<line x1="377.9" y1="113.3" x2="378.4" y2="127.4" stroke="#555" stroke-width="0.8"/>
<ellipse cx="391" cy="131.8" rx="8.4" ry="12.6" transform="rotate(22 391 131.8)" fill="#fff" stroke="#333" stroke-width="1.2"/>
<ellipse cx="391.8" cy="132.2" rx="6.6" ry="10.6" transform="rotate(22 391.8 132.2)" fill="#fff" stroke="#4a4a4a" stroke-width="1.8"/>
<ellipse cx="390.8" cy="131.6" rx="5" ry="9" transform="rotate(22 390.8 131.6)" fill="#fff" stroke="#777" stroke-width="0.8"/>
<ellipse cx="386.6" cy="155.6" rx="8.6" ry="4.4" transform="rotate(-12 386.6 155.6)" fill="#fff" stroke="#333" stroke-width="1.2"/>
<ellipse cx="386.8" cy="156.4" rx="6.4" ry="2.6" transform="rotate(-12 386.8 156.4)" fill="#999" stroke="#444" stroke-width="1.6"/>
<path d="M382.2 149.2 Q 400.8 144.9 398.6 159" fill="none" stroke="#444" stroke-width="0.9"/>
<path d="M364.6 129.8 Q 363.7 123.6 371.3 121.4" fill="none" stroke="#222" stroke-width="2.6" stroke-linecap="round"/>
<line x1="364.8" y1="130.7" x2="369.2" y2="131.8" stroke="#444" stroke-width="0.9"/>
<circle cx="380.1" cy="106.7" r="1.15" fill="#2a2a2a"/>
<circle cx="388.8" cy="110" r="1.15" fill="#2a2a2a"/>
<circle cx="401.9" cy="111.6" r="1.15" fill="#2a2a2a"/>
<circle cx="408.4" cy="108.9" r="1.15" fill="#2a2a2a"/>
<circle cx="414.4" cy="108.4" r="1.15" fill="#2a2a2a"/>
<circle cx="423.1" cy="113.8" r="1.15" fill="#2a2a2a"/>
<circle cx="426.4" cy="125.8" r="1.15" fill="#2a2a2a"/>
<circle cx="423.1" cy="141.1" r="1.15" fill="#2a2a2a"/>
<circle cx="414.4" cy="156.9" r="1.15" fill="#2a2a2a"/>
<circle cx="401.9" cy="167.8" r="1.15" fill="#2a2a2a"/>
<circle cx="394.8" cy="170.5" r="1.15" fill="#2a2a2a"/>
<circle cx="388.8" cy="171.6" r="1.15" fill="#2a2a2a"/>
<circle cx="380.1" cy="166.1" r="1.15" fill="#2a2a2a"/>
<circle cx="380.1" cy="138.9" r="1.15" fill="#2a2a2a"/>
<circle cx="388.2" cy="123.1" r="1.15" fill="#2a2a2a"/>
<circle cx="372.4" cy="163.4" r="1.15" fill="#2a2a2a"/>
</g>
<ellipse cx="421" cy="186.5" rx="3.4" ry="1.8" transform="rotate(28 421 186.5)" fill="#ddd" stroke="#444" stroke-width="1"/>
<ellipse cx="438.5" cy="161" rx="10" ry="13" transform="rotate(20 438.5 161)" fill="#fff" stroke="#333" stroke-width="1.2"/>
<ellipse cx="440.3" cy="161.2" rx="9" ry="12.3" transform="rotate(20 440.3 161.2)" fill="#d8d8d8" stroke="#444" stroke-width="1.2"/>
<ellipse cx="440.5" cy="161.3" rx="6.5" ry="9.5" transform="rotate(20 440.5 161.3)" fill="#fff" stroke="#777" stroke-width="2.2" stroke-dasharray="1 1"/>
<ellipse cx="440.5" cy="161.3" rx="3.6" ry="6" transform="rotate(20 440.5 161.3)" fill="#fff" stroke="#333" stroke-width="1.1"/>
<ellipse cx="458.6" cy="172.5" rx="7.2" ry="9.8" transform="rotate(20 458.6 172.5)" fill="#fff" stroke="#444" stroke-width="1.1"/>
<ellipse cx="459.6" cy="172.9" rx="5.4" ry="7.8" transform="rotate(20 459.6 172.9)" fill="#fff" stroke="#444" stroke-width="1.4"/>
<ellipse cx="474" cy="181.2" rx="6.6" ry="9" transform="rotate(20 474 181.2)" fill="#fff" stroke="#555" stroke-width="1"/>
<ellipse cx="476.2" cy="182.2" rx="6.6" ry="9" transform="rotate(20 476.2 182.2)" fill="#fff" stroke="#444" stroke-width="1"/>
<ellipse cx="476.2" cy="182.2" rx="4.8" ry="7" transform="rotate(20 476.2 182.2)" fill="#fff" stroke="#444" stroke-width="1.3"/>
<ellipse cx="489" cy="189.6" rx="6.6" ry="9" transform="rotate(20 489 189.6)" fill="#fff" stroke="#555" stroke-width="1"/>
<ellipse cx="491.2" cy="190.6" rx="6.6" ry="9" transform="rotate(20 491.2 190.6)" fill="#fff" stroke="#444" stroke-width="1"/>
<ellipse cx="491.2" cy="190.6" rx="4.8" ry="7" transform="rotate(20 491.2 190.6)" fill="#fff" stroke="#444" stroke-width="1.3"/>
<ellipse cx="515.2" cy="205.2" rx="18.6" ry="26.6" transform="rotate(20 515.2 205.2)" fill="none" stroke="#555" stroke-width="2.2" stroke-dasharray="1 1"/>
<ellipse cx="516.2" cy="205.6" rx="17.8" ry="25.8" transform="rotate(20 516.2 205.6)" fill="#fff" stroke="#333" stroke-width="1.1"/>
<ellipse cx="518" cy="206.4" rx="16.6" ry="24.2" transform="rotate(20 518 206.4)" fill="#fff" stroke="#444" stroke-width="0.9"/>
<ellipse cx="518.5" cy="207" rx="14" ry="20.5" transform="rotate(20 518.5 207)" fill="none" stroke="#777" stroke-width="0.8"/>
<ellipse cx="519.5" cy="207.8" rx="11.5" ry="16.5" transform="rotate(20 519.5 207.8)" fill="none" stroke="#888" stroke-width="0.8"/>
<path d="M515.5 201 L526 198.3 L534.5 204 L534.5 216 L524 222.5 L514.5 217 Z" fill="#4a4a4a" stroke="#333" stroke-width="0.5" stroke-linejoin="round"/>
<ellipse cx="519.2" cy="209.2" rx="5.5" ry="9.3" transform="rotate(14 519.2 209.2)" fill="#555" stroke="#3a3a3a" stroke-width="3" stroke-dasharray="0.9 0.9"/>
<ellipse cx="528" cy="211.3" rx="6.8" ry="10.2" transform="rotate(14 528 211.3)" fill="#fff" stroke="#333" stroke-width="1.1"/>
<ellipse cx="528.6" cy="211.6" rx="4.6" ry="7.8" transform="rotate(14 528.6 211.6)" fill="#eee" stroke="#777" stroke-width="0.8"/>
<ellipse cx="549" cy="225" rx="6" ry="8.8" transform="rotate(20 549 225)" fill="none" stroke="#333" stroke-width="2.1"/>
<ellipse cx="568.4" cy="234.4" rx="5.2" ry="7.8" transform="rotate(20 568.4 234.4)" fill="none" stroke="#555" stroke-width="1.3" stroke-dasharray="30 3"/>
<ellipse cx="569.4" cy="234.8" rx="5.2" ry="7.8" transform="rotate(20 569.4 234.8)" fill="none" stroke="#888" stroke-width="0.8" stroke-dasharray="30 3"/>
<ellipse cx="585.3" cy="245.3" rx="6" ry="8.4" transform="rotate(20 585.3 245.3)" fill="none" stroke="#2a2a2a" stroke-width="2.1"/>
<ellipse cx="608" cy="264.5" rx="11.5" ry="23" transform="rotate(20 608 264.5)" fill="#fff" stroke="#333" stroke-width="1.1"/>
<path d="M606 243 L619 242 L633 250 L638 262 L636 275 L627 285.5 L615 287 L604 284 Z" fill="#fff" stroke="#3a3a3a" stroke-width="1" stroke-linejoin="round"/>
<ellipse cx="611" cy="264.6" rx="10.5" ry="21.5" transform="rotate(20 611 264.6)" fill="none" stroke="#555" stroke-width="0.9"/>
<ellipse cx="615.5" cy="264.6" rx="9.5" ry="19" transform="rotate(20 615.5 264.6)" fill="#fff" stroke="#555" stroke-width="0.9"/>
<ellipse cx="621.5" cy="266.5" rx="9.5" ry="14.5" transform="rotate(20 621.5 266.5)" fill="#fff" stroke="#444" stroke-width="1"/>
<ellipse cx="628.5" cy="268.3" rx="8.6" ry="11.6" transform="rotate(20 628.5 268.3)" fill="#fff" stroke="#333" stroke-width="1.1"/>
<ellipse cx="629.4" cy="268.7" rx="6.6" ry="9.4" transform="rotate(20 629.4 268.7)" fill="#9a9a9a" stroke="#444" stroke-width="2"/>
<ellipse cx="630.4" cy="269" rx="4" ry="6.6" transform="rotate(20 630.4 269)" fill="#ddd" stroke="#555" stroke-width="1"/>
<ellipse cx="612" cy="249" rx="1.4" ry="2" transform="rotate(20 612 249)" fill="#fff" stroke="#444" stroke-width="0.9"/>
<ellipse cx="621" cy="251" rx="1.4" ry="2" transform="rotate(20 621 251)" fill="#fff" stroke="#444" stroke-width="0.9"/>
<ellipse cx="604" cy="274" rx="1.4" ry="2" transform="rotate(20 604 274)" fill="#fff" stroke="#444" stroke-width="0.9"/>
<ellipse cx="612" cy="282" rx="1.4" ry="2" transform="rotate(20 612 282)" fill="#fff" stroke="#444" stroke-width="0.9"/>
<ellipse cx="620" cy="279" rx="1.4" ry="2" transform="rotate(20 620 279)" fill="#fff" stroke="#444" stroke-width="0.9"/>
<line x1="606" y1="246" x2="601.5" y2="274" stroke="#666" stroke-width="0.8"/>
<line x1="610" y1="244.5" x2="605" y2="279" stroke="#666" stroke-width="0.8"/>
<ellipse cx="570.6" cy="295.6" rx="2.6" ry="3.6" transform="rotate(20 570.6 295.6)" fill="#fff" stroke="#444" stroke-width="1"/>
<ellipse cx="572.6" cy="296.6" rx="2.6" ry="3.6" transform="rotate(20 572.6 296.6)" fill="#ccc" stroke="#444" stroke-width="1.2"/>
<ellipse cx="582.5" cy="301.8" rx="5.4" ry="7.4" transform="rotate(20 582.5 301.8)" fill="#333" stroke="#222" stroke-width="2.4" stroke-dasharray="1 0.8"/>
<ellipse cx="586" cy="303.6" rx="5.2" ry="7.2" transform="rotate(20 586 303.6)" fill="#fff" stroke="#2a2a2a" stroke-width="1.4"/>
<ellipse cx="586.4" cy="303.8" rx="3" ry="4.8" transform="rotate(20 586.4 303.8)" fill="#eee" stroke="#444" stroke-width="1.2"/>
<ellipse cx="595.5" cy="308.8" rx="3" ry="4.2" transform="rotate(20 595.5 308.8)" fill="#fff" stroke="#444" stroke-width="1"/>
<ellipse cx="597.8" cy="310" rx="3" ry="4.2" transform="rotate(20 597.8 310)" fill="#ccc" stroke="#444" stroke-width="1.2"/>
<path d="M624 298 L633.5 303 L632 307.6 L622.6 302.5 Z" fill="#e8e8e8" stroke="#444" stroke-width="0.9" stroke-linejoin="round"/>
<ellipse cx="632.8" cy="305.3" rx="1.6" ry="2.6" transform="rotate(20 632.8 305.3)" fill="#fff" stroke="#444" stroke-width="0.9"/>
<ellipse cx="653.6" cy="284.8" rx="11.4" ry="16.2" transform="rotate(20 653.6 284.8)" fill="#fff" stroke="#3a3a3a" stroke-width="1.1"/>
<ellipse cx="655.6" cy="285.6" rx="11" ry="15.8" transform="rotate(20 655.6 285.6)" fill="#eee" stroke="#3a3a3a" stroke-width="1.1"/>
<ellipse cx="656.4" cy="286" rx="8" ry="12.4" transform="rotate(20 656.4 286)" fill="#fff" stroke="#444" stroke-width="1.2"/>
<line x1="680" y1="270.4" x2="688.5" y2="274.8" stroke="#2a2a2a" stroke-width="2.6" stroke-linecap="round"/>
<line x1="688.5" y1="274.8" x2="697" y2="279.5" stroke="#9a9a9a" stroke-width="0.8"/>
<ellipse cx="693" cy="308" rx="21.5" ry="31.5" transform="rotate(20 693 308)" fill="#fff" stroke="#333" stroke-width="1.1"/>
<ellipse cx="696.4" cy="309.2" rx="21" ry="31" transform="rotate(20 696.4 309.2)" fill="#fff" stroke="#333" stroke-width="1.1"/>
<ellipse cx="698.6" cy="310" rx="16" ry="24.5" transform="rotate(20 698.6 310)" fill="#8c8c8c" stroke="#333" stroke-width="1.1"/>
<ellipse cx="699.6" cy="310.4" rx="14.6" ry="23" transform="rotate(20 699.6 310.4)" fill="#9a9a9a" stroke="#555" stroke-width="1.6" stroke-dasharray="0.9 0.9"/>
<ellipse cx="694.6" cy="307.6" rx="13.6" ry="22.4" transform="rotate(20 694.6 307.6)" fill="#fff" stroke="#666" stroke-width="0.8"/>
<ellipse cx="698.6" cy="310" rx="16" ry="24.5" transform="rotate(20 698.6 310)" fill="none" stroke="#333" stroke-width="1.1"/>
<line x1="697" y1="309.5" x2="706" y2="314.5" stroke="#9a9a9a" stroke-width="0.7"/>
<circle cx="714.9" cy="316" r="0.9" fill="#444"/>
<circle cx="704.7" cy="331.3" r="0.9" fill="#444"/>
<circle cx="691.1" cy="336.4" r="0.9" fill="#444"/>
<circle cx="680.4" cy="329" r="0.9" fill="#444"/>
<circle cx="677.7" cy="312.6" r="0.9" fill="#444"/>
<circle cx="684.2" cy="294.7" r="0.9" fill="#444"/>
<circle cx="696.9" cy="283.8" r="0.9" fill="#444"/>
<circle cx="709.8" cy="285" r="0.9" fill="#444"/>
<circle cx="716.9" cy="297.7" r="0.9" fill="#444"/>
<ellipse cx="707.8" cy="339.8" rx="3.2" ry="1.9" transform="rotate(28 707.8 339.8)" fill="#ddd" stroke="#444" stroke-width="1"/>
<ellipse cx="736.6" cy="333.4" rx="13" ry="18" transform="rotate(20 736.6 333.4)" fill="#fff" stroke="#333" stroke-width="1.2"/>
<ellipse cx="739" cy="334.2" rx="12.4" ry="17.4" transform="rotate(20 739 334.2)" fill="#e4e4e4" stroke="#333" stroke-width="1.2"/>
<ellipse cx="739.6" cy="334.4" rx="9.6" ry="14.2" transform="rotate(20 739.6 334.4)" fill="#fff" stroke="#555" stroke-width="1"/>
<ellipse cx="740" cy="334.6" rx="7" ry="11.2" transform="rotate(20 740 334.6)" fill="#fff" stroke="#333" stroke-width="1.2"/>
<ellipse cx="733" cy="344" rx="2" ry="3" transform="rotate(20 733 344)" fill="none" stroke="#444" stroke-width="0.8"/>
<ellipse cx="737.5" cy="347" rx="2" ry="3" transform="rotate(20 737.5 347)" fill="none" stroke="#444" stroke-width="0.8"/>
<line x1="740.5" y1="335" x2="760" y2="346" stroke="#9a9a9a" stroke-width="0.8"/>
<ellipse cx="770.8" cy="353.4" rx="11" ry="15.2" transform="rotate(20 770.8 353.4)" fill="#fff" stroke="#333" stroke-width="1.1"/>
<ellipse cx="772.6" cy="354.2" rx="10.4" ry="14.6" transform="rotate(20 772.6 354.2)" fill="#ddd" stroke="#333" stroke-width="1.2"/>
<ellipse cx="773.2" cy="354.4" rx="6.8" ry="10.6" transform="rotate(20 773.2 354.4)" fill="#fff" stroke="#333" stroke-width="1.8"/>
<ellipse cx="773.6" cy="354.6" rx="5" ry="8.6" transform="rotate(20 773.6 354.6)" fill="none" stroke="#777" stroke-width="0.8"/>
<line x1="774" y1="355" x2="787" y2="362" stroke="#9a9a9a" stroke-width="0.8"/>
<circle cx="613" cy="342.3" r="2" fill="#333"/>
<circle cx="628.6" cy="351.2" r="1.8" fill="#333"/>
<line x1="639.6" y1="357.3" x2="650.5" y2="363.2" stroke="#333" stroke-width="2.6" stroke-dasharray="1.2 0.8"/>
<path d="M391 250 L401 245 L412 247 L424 250 L431 258 L433 270 L431 285 L424 300 L413 312 L400 320 L388 319 L378 312 L374 300 L376 285 L381 268 L385 257 Z" fill="#fff" stroke="#333" stroke-width="1.1" stroke-linejoin="round"/>
<ellipse cx="404" cy="284.5" rx="24.5" ry="34" transform="rotate(22 404 284.5)" fill="none" stroke="#555" stroke-width="0.9"/>
<ellipse cx="407.5" cy="285.5" rx="21" ry="30" transform="rotate(22 407.5 285.5)" fill="none" stroke="#666" stroke-width="0.9"/>
<ellipse cx="412" cy="287.6" rx="16.5" ry="23" transform="rotate(22 412 287.6)" fill="#fff" stroke="#444" stroke-width="1"/>
<ellipse cx="415.4" cy="289.2" rx="13" ry="18.6" transform="rotate(22 415.4 289.2)" fill="#fff" stroke="#333" stroke-width="1.1"/>
<ellipse cx="416.2" cy="289.6" rx="10.6" ry="15.6" transform="rotate(22 416.2 289.6)" fill="#bbb" stroke="#444" stroke-width="1.8"/>
<ellipse cx="417" cy="290" rx="8" ry="12.6" transform="rotate(22 417 290)" fill="#fff" stroke="#555" stroke-width="1"/>
<ellipse cx="427.1" cy="293.7" rx="1.6" ry="2.2" transform="rotate(20 427.1 293.7)" fill="#fff" stroke="#444" stroke-width="0.9"/>
<ellipse cx="417.2" cy="308.9" rx="1.6" ry="2.2" transform="rotate(20 417.2 308.9)" fill="#fff" stroke="#444" stroke-width="0.9"/>
<ellipse cx="403.5" cy="317.4" rx="1.6" ry="2.2" transform="rotate(20 403.5 317.4)" fill="#fff" stroke="#444" stroke-width="0.9"/>
<ellipse cx="389.7" cy="316.9" rx="1.6" ry="2.2" transform="rotate(20 389.7 316.9)" fill="#fff" stroke="#444" stroke-width="0.9"/>
<ellipse cx="379.4" cy="307.6" rx="1.6" ry="2.2" transform="rotate(20 379.4 307.6)" fill="#fff" stroke="#444" stroke-width="0.9"/>
<ellipse cx="375.5" cy="292" rx="1.6" ry="2.2" transform="rotate(20 375.5 292)" fill="#fff" stroke="#444" stroke-width="0.9"/>
<ellipse cx="378.9" cy="274.3" rx="1.6" ry="2.2" transform="rotate(20 378.9 274.3)" fill="#fff" stroke="#444" stroke-width="0.9"/>
<ellipse cx="388.8" cy="259.1" rx="1.6" ry="2.2" transform="rotate(20 388.8 259.1)" fill="#fff" stroke="#444" stroke-width="0.9"/>
<ellipse cx="402.5" cy="250.6" rx="1.6" ry="2.2" transform="rotate(20 402.5 250.6)" fill="#fff" stroke="#444" stroke-width="0.9"/>
<ellipse cx="416.3" cy="251.1" rx="1.6" ry="2.2" transform="rotate(20 416.3 251.1)" fill="#fff" stroke="#444" stroke-width="0.9"/>
<ellipse cx="426.6" cy="260.4" rx="1.6" ry="2.2" transform="rotate(20 426.6 260.4)" fill="#fff" stroke="#444" stroke-width="0.9"/>
<ellipse cx="430.5" cy="276" rx="1.6" ry="2.2" transform="rotate(20 430.5 276)" fill="#fff" stroke="#444" stroke-width="0.9"/>
<line x1="389.5" y1="236.6" x2="396" y2="240" stroke="#2a2a2a" stroke-width="2.8" stroke-linecap="round"/>
<circle cx="439.3" cy="252" r="2" fill="#333"/>
<line x1="456.4" y1="262" x2="458.6" y2="264.4" stroke="#333" stroke-width="3.2" stroke-linecap="round"/>
<line x1="440" y1="276.6" x2="445.5" y2="279.6" stroke="#2a2a2a" stroke-width="3" stroke-linecap="round"/>
<path d="M419 323.5 L431 330 L429.5 333.4 L417.5 327 Z" fill="#555" stroke="#333" stroke-width="0.9" stroke-linejoin="round"/>
<ellipse cx="420" cy="324.4" rx="2.2" ry="3.4" transform="rotate(20 420 324.4)" fill="#ddd" stroke="#333" stroke-width="1"/>
<path d="M438.5 298.6 L452 303.8 L452 315.5 L439 309.5 Z" fill="#fff" stroke="#444" stroke-width="1" stroke-linejoin="round"/>
<ellipse cx="439.4" cy="304" rx="3.6" ry="5.6" transform="rotate(20 439.4 304)" fill="#fff" stroke="#444" stroke-width="1"/>
<ellipse cx="467.4" cy="320.4" rx="25.6" ry="35.4" transform="rotate(20 467.4 320.4)" fill="none" stroke="#777" stroke-width="2" stroke-dasharray="0.8 0.8"/>
<ellipse cx="468" cy="320.6" rx="25.4" ry="35.2" transform="rotate(20 468 320.6)" fill="#fff" stroke="#333" stroke-width="1.1"/>
<ellipse cx="470.6" cy="321.4" rx="24.8" ry="34.4" transform="rotate(20 470.6 321.4)" fill="#fff" stroke="#333" stroke-width="1.1"/>
<ellipse cx="473.4" cy="323" rx="15.6" ry="22.6" transform="rotate(20 473.4 323)" fill="#fff" stroke="#444" stroke-width="1"/>
<ellipse cx="474.4" cy="323.4" rx="13.6" ry="20.4" transform="rotate(20 474.4 323.4)" fill="#fff" stroke="#444" stroke-width="1.4"/>
<ellipse cx="475.6" cy="324" rx="11" ry="17.4" transform="rotate(20 475.6 324)" fill="none" stroke="#777" stroke-width="0.9"/>
<ellipse cx="486.9" cy="335.4" rx="1.5" ry="2.2" transform="rotate(20 486.9 335.4)" fill="#fff" stroke="#444" stroke-width="0.9"/>
<ellipse cx="472.4" cy="348.5" rx="1.5" ry="2.2" transform="rotate(20 472.4 348.5)" fill="#fff" stroke="#444" stroke-width="0.9"/>
<ellipse cx="457.5" cy="346" rx="1.5" ry="2.2" transform="rotate(20 457.5 346)" fill="#fff" stroke="#444" stroke-width="0.9"/>
<ellipse cx="450.8" cy="329.5" rx="1.5" ry="2.2" transform="rotate(20 450.8 329.5)" fill="#fff" stroke="#444" stroke-width="0.9"/>
<ellipse cx="456.3" cy="308.6" rx="1.5" ry="2.2" transform="rotate(20 456.3 308.6)" fill="#fff" stroke="#444" stroke-width="0.9"/>
<ellipse cx="470.8" cy="295.5" rx="1.5" ry="2.2" transform="rotate(20 470.8 295.5)" fill="#fff" stroke="#444" stroke-width="0.9"/>
<ellipse cx="485.7" cy="298" rx="1.5" ry="2.2" transform="rotate(20 485.7 298)" fill="#fff" stroke="#444" stroke-width="0.9"/>
<ellipse cx="492.4" cy="314.5" rx="1.5" ry="2.2" transform="rotate(20 492.4 314.5)" fill="#fff" stroke="#444" stroke-width="0.9"/>
<line x1="453.8" y1="114.4" x2="443.3" y2="150.3" stroke="#1e1e1e" stroke-width="1.3"/>
<circle cx="458.2" cy="103.8" r="10.6" fill="#fff" stroke="#222" stroke-width="1.4"/>
<text x="458.2" y="107.9" text-anchor="middle" font-family="'Liberation Sans',sans-serif" font-weight="bold" font-size="11.5" fill="#222">1</text>
<line x1="543.6" y1="147.2" x2="529" y2="182.6" stroke="#1e1e1e" stroke-width="1.3"/>
<circle cx="550.3" cy="137.6" r="10.6" fill="#fff" stroke="#222" stroke-width="1.4"/>
<text x="550.3" y="141.7" text-anchor="middle" font-family="'Liberation Sans',sans-serif" font-weight="bold" font-size="11.5" fill="#222">2</text>
<line x1="589" y1="191.7" x2="570.8" y2="229" stroke="#1e1e1e" stroke-width="1.3"/>
<circle cx="594" cy="181.7" r="10.6" fill="#fff" stroke="#222" stroke-width="1.4"/>
<text x="594" y="185.8" text-anchor="middle" font-family="'Liberation Sans',sans-serif" font-weight="bold" font-size="11.5" fill="#222">3</text>
<line x1="606.2" y1="207.2" x2="589" y2="238.9" stroke="#1e1e1e" stroke-width="1.3"/>
<circle cx="612" cy="197.7" r="10.6" fill="#fff" stroke="#222" stroke-width="1.4"/>
<text x="612" y="201.8" text-anchor="middle" font-family="'Liberation Sans',sans-serif" font-weight="bold" font-size="11.5" fill="#222">4</text>
<line x1="760.3" y1="290.2" x2="744.6" y2="317.3" stroke="#1e1e1e" stroke-width="1.3"/>
<circle cx="767" cy="279.3" r="10.6" fill="#fff" stroke="#222" stroke-width="1.4"/>
<text x="767" y="283.4" text-anchor="middle" font-family="'Liberation Sans',sans-serif" font-weight="bold" font-size="11.5" fill="#222">5</text>
<line x1="798.5" y1="308.3" x2="780.4" y2="340.5" stroke="#1e1e1e" stroke-width="1.3"/>
<circle cx="804.6" cy="297.6" r="10.6" fill="#fff" stroke="#222" stroke-width="1.4"/>
<text x="804.6" y="301.7" text-anchor="middle" font-family="'Liberation Sans',sans-serif" font-weight="bold" font-size="11.5" fill="#222">7</text>
<line x1="354" y1="350" x2="381" y2="316.9" stroke="#1e1e1e" stroke-width="1.3"/>
<circle cx="347.3" cy="358.8" r="10.6" fill="#fff" stroke="#222" stroke-width="1.4"/>
<text x="347.3" y="362.9" text-anchor="middle" font-family="'Liberation Sans',sans-serif" font-weight="bold" font-size="11.5" fill="#222">6</text>
<text x="782.5" y="401.7" font-family="'Liberation Sans',sans-serif" font-size="6.6" fill="#555" textLength="61" lengthAdjust="spacingAndGlyphs">TRDHE0110063401</text>
</g>
<text x="276" y="418.2" font-family="'Liberation Sans',sans-serif" font-size="9.2" font-weight="normal" font-style="italic" fill="#1e1e1e" textLength="34.5" lengthAdjust="spacing">Fig. 130</text>
<text x="276" y="435.5" font-family="'Liberation Sans',sans-serif" font-size="11.6" font-weight="bold" font-style="normal" fill="#1c1c1c">6.</text>
<text x="306" y="435.5" font-family="'Liberation Sans',sans-serif" font-size="11.7" font-weight="normal" font-style="normal" fill="#3e3e3e" textLength="460" lengthAdjust="spacing">Use a suitable puller and remove the gear (2) and carrier assembly with the bearing (1).</text>
<text x="276" y="453.5" font-family="'Liberation Sans',sans-serif" font-size="11.6" font-weight="bold" font-style="normal" fill="#1c1c1c">7.</text>
<text x="306" y="453.5" font-family="'Liberation Sans',sans-serif" font-size="11.7" font-weight="normal" font-style="normal" fill="#3e3e3e" textLength="378" lengthAdjust="spacing">Remove the split ring 93), washer (4), bearing (5) cover (6), and seal (7).</text>
<text x="276" y="529.2" font-family="'Liberation Sans',sans-serif" font-size="11.6" font-weight="bold" font-style="normal" fill="#1c1c1c">8.</text>
<text x="306" y="529.2" font-family="'Liberation Sans',sans-serif" font-size="11.7" font-weight="normal" font-style="normal" fill="#3e3e3e" textLength="384.6" lengthAdjust="spacing">Check the bearings for excessive play or roughness. Replace as needed.</text>
<text x="276" y="588.3" font-family="'Liberation Sans',sans-serif" font-size="11.6" font-weight="bold" font-style="normal" fill="#1c1c1c">1.</text>
<text x="306" y="588.3" font-family="'Liberation Sans',sans-serif" font-size="11.7" font-weight="normal" font-style="normal" fill="#3e3e3e" textLength="198" lengthAdjust="spacing">Put sealant on the outside of the seal</text>
<text x="306" y="474.5" font-family="'Liberation Sans',sans-serif" font-size="11.7" fill="#3e3e3e" textLength="521" lengthAdjust="spacing"><tspan font-weight="bold" fill="#1c1c1c">NOTE:</tspan><tspan font-style="italic"> The round one piece split ring is difficult to remove. Use snap ring pliers to spread the split</tspan></text>
<text x="306" y="489.5" font-family="'Liberation Sans',sans-serif" font-size="11.7" font-weight="normal" font-style="italic" fill="#3e3e3e" textLength="486" lengthAdjust="spacing">ring out until one end can be pried out of the groove. The split ring can then be spiraled out.</text>
<text x="306" y="510.5" font-family="'Liberation Sans',sans-serif" font-size="11.7" font-weight="normal" font-style="normal" fill="#3e3e3e" textLength="314.3" lengthAdjust="spacing">The two piece split ring will replace the one piece split ring.</text>
<text x="306" y="602.1" font-family="'Liberation Sans',sans-serif" font-size="11.7" font-weight="normal" font-style="normal" fill="#3e3e3e" textLength="163" lengthAdjust="spacing">housing and install the seal (1).</text>
<rect x="276" y="545" width="570" height="1" fill="#3a3a3a"/>
<text x="276" y="560.3" font-family="'Liberation Sans',sans-serif" font-size="14" font-weight="bold" fill="#111" textLength="304" lengthAdjust="spacing" xml:space="preserve">6.11.10  Installing the wheel shaft seal/cover</text>
<rect x="276" y="567.6" width="570" height="1.3" fill="#111"/>
<rect x="575.1" y="577.1" width="270.2" height="186.2" fill="#fff" stroke="#111" stroke-width="1.3"/>
<g filter="url(#soft)">
<ellipse cx="650.6" cy="664" rx="12.4" ry="19.6" transform="rotate(12 650.6 664)" fill="#fff" stroke="#333" stroke-width="1.2"/>
<ellipse cx="652.2" cy="664.3" rx="12.6" ry="19.4" transform="rotate(12 652.2 664.3)" fill="#8a8a8a" stroke="#2a2a2a" stroke-width="2.2"/>
<ellipse cx="653.4" cy="664.6" rx="9" ry="15.4" transform="rotate(12 653.4 664.6)" fill="#fff" stroke="#333" stroke-width="1.8"/>
<ellipse cx="654.6" cy="664.8" rx="6.4" ry="12.4" transform="rotate(12 654.6 664.8)" fill="#ddd" stroke="#444" stroke-width="1.4"/>
<ellipse cx="655.6" cy="665" rx="4.2" ry="9.4" transform="rotate(12 655.6 665)" fill="#fff" stroke="#555" stroke-width="1"/>
<path d="M769.3 678.4 L769 679.6 L768.7 680.9 L768.4 682.2 L768.1 683.5 L767.9 684.7 L767.7 686 L767.5 687.4 L767.3 688.7 L767.1 690 L766.9 691.3 L766.7 692.7 L766.7 694.1 L766.8 695.7 L766.9 697.3 L767 699 L767 700.6 L766.9 702.1 L766.5 703.5 L766 704.8 L765.3 705.9 L764.4 706.8 L763.4 707.6 L762.3 708.3 L761.2 708.9 L760.2 709.6 L759.5 710.5 L758.7 711.4 L758 712.3 L757.3 713.2 L756.6 714.1 L755.9 715 L755.2 715.9 L754.5 716.8 L753.9 717.8 L753.3 718.8 L752.6 719.8 L752 720.9 L751.4 721.9 L750.8 723 L750.2 724.1 L749.5 725.1 L749 726.4 L748.5 727.9 L748 729.5 L747.5 731.1 L747 732.6 L746.3 733.9 L745.5 734.9 L744.7 735.6 L743.7 736 L742.7 736.1 L741.7 736 L740.6 735.7 L739.6 735.4 L738.6 735.2 L737.7 735.4 L736.8 735.6 L735.9 735.8 L735 736 L734.2 736.3 L733.3 736.5 L732.5 736.8 L731.6 737.1 L730.8 737.5 L730 737.8 L729.1 738.2 L728.3 738.7 L727.4 739.1 L726.6 739.6 L725.7 740.1 L724.9 740.5 L724 741.2 L723.1 742.2 L722.1 743.3 L721.2 744.4 L720.2 745.3 L719.3 745.9 L718.3 746.2 L717.4 746.1 L716.5 745.7 L715.7 744.9 L715 743.9 L714.3 742.8 L713.6 741.6 L712.9 740.6 L712.2 740 L711.4 739.5 L710.6 738.9 L709.9 738.4 L709.2 737.9 L708.4 737.4 L707.7 737 L706.9 736.6 L706.2 736.2 L705.4 735.8 L704.6 735.5 L703.8 735.2 L703 734.9 L702.2 734.6 L701.4 734.3 L700.6 734 L699.6 733.9 L698.6 734.1 L697.5 734.3 L696.4 734.5 L695.3 734.5 L694.4 734.2 L693.6 733.7 L692.9 732.9 L692.4 731.8 L692 730.4 L691.8 728.9 L691.7 727.2 L691.5 725.6 L691.4 724.1 L691 722.9 L690.7 721.8 L690.3 720.7 L689.9 719.6 L689.5 718.5 L689.1 717.4 L688.7 716.4 L688.3 715.3 L687.8 714.3 L687.6 713.4 L687.5 712.5 L687.3 711.6 L687.2 710.7 L687 709.8 L686.8 708.9 L686.7 708 L686.5 707.2 L686.1 706.6 L685.8 706 L685.4 705.3 L685.1 704.5 L684.9 703.5 L684.8 702.4 L684.8 701.1 L684.9 699.7 L685.2 698.2 L685.5 696.5 L685.8 694.9 L686.2 693.3 L686.5 691.7 L686.7 690.3 L686.9 689 L687 687.7 L687.2 686.4 L687.4 685 L687.5 683.7 L687.6 682.5 L687.8 681.2 L687.9 679.9 L688 678.6 L688.1 677.4 L688.2 676.1 L688.3 674.8 L688.3 673.6 L688.4 672.3 L688.5 671 L688.5 669.6 L688.5 668.3 L688.4 666.9 L688.3 665.5 L688.3 664.1 L688.4 662.7 L688.5 661.2 L688.8 659.8 L689.1 658.5 L689.6 657.2 L690.1 656 L690.6 654.8 L691.1 653.7 L691.6 652.6 L692 651.4 L692.4 650.2 L692.7 649 L693.1 647.8 L693.4 646.7 L693.8 645.5 L694.1 644.3 L694.4 643.2 L694.7 642 L695.1 640.8 L695.4 639.5 L695.7 638.3 L696 637 L696.3 635.8 L696.6 634.5 L696.9 633.2 L697.1 631.8 L697.4 630.2 L697.6 628.5 L697.8 626.8 L698.1 625.2 L698.4 623.7 L698.8 622.4 L699.2 621.4 L699.7 620.5 L700.2 619.9 L700.7 619.5 L701.3 619.2 L701.8 618.9 L702.3 618.5 L702.7 618 L703.3 617.3 L704.2 616.7 L705 616.1 L705.8 615.6 L706.6 614.9 L707.4 614.3 L708.2 613.7 L709 613 L709.7 612.3 L710.5 611.5 L711.3 610.8 L712 610 L712.8 609.2 L713.6 608.4 L714.3 607.6 L715.1 606.6 L715.8 605.3 L716.5 603.8 L717.3 602.5 L718.1 601.2 L718.9 600.2 L719.8 599.5 L720.8 599.2 L721.7 599.2 L722.6 599.6 L723.6 600.2 L724.5 600.9 L725.4 601.6 L726.3 602.3 L727.1 602.5 L728 602.7 L728.8 602.8 L729.7 603 L730.5 603.1 L731.3 603.3 L732.2 603.3 L733 603.4 L733.8 603.4 L734.7 603.4 L735.5 603.4 L736.4 603.3 L737.2 603.2 L738.1 603.1 L739 603 L739.9 603 L740.8 602.6 L741.8 602 L742.9 601.3 L743.9 600.7 L745 600.2 L746 600 L746.9 600.2 L747.7 600.6 L748.4 601.4 L749.1 602.6 L749.6 603.9 L750 605.3 L750.4 606.8 L750.9 608.1 L751.4 609 L752 609.9 L752.6 610.7 L753.2 611.6 L753.8 612.4 L754.4 613.2 L755 614 L755.6 614.8 L756.2 615.5 L756.9 616.2 L757.5 616.8 L758.2 617.5 L758.9 618.1 L759.6 618.8 L760.3 619.4 L761 620.1 L761.8 620.6 L762.8 620.9 L763.9 621.1 L764.9 621.4 L765.9 621.9 L766.7 622.5 L767.4 623.4 L767.8 624.6 L768.1 625.9 L768.1 627.4 L768.1 629.1 L767.9 630.8 L767.7 632.4 L767.6 634 L767.6 635.4 L767.8 636.7 L767.9 637.9 L768.1 639.2 L768.2 640.5 L768.4 641.7 L768.6 642.9 L768.8 644.1 L769 645.3 L769.3 646.5 L769.5 647.7 L769.8 648.8 L770.1 650 L770.4 651.2 L770.7 652.3 L771 653.5 L771.5 654.7 L772.1 655.8 L772.8 656.9 L773.5 658.1 L774.1 659.3 L774.5 660.6 L774.7 662 L774.6 663.4 L774.3 664.8 L773.8 666.3 L773.2 667.7 L772.5 669.1 L771.7 670.5 L771.1 671.9 L770.6 673.2 L770.3 674.5 L770 675.8 L769.6 677.1 Z" fill="#fff" stroke="#222" stroke-width="1.8" stroke-linejoin="round"/>
<path d="M740.6 610.5 L741.9 611 L743.3 611.6 L744.6 612.3 L745.9 613.1 L747.2 614 L748.4 614.9 L749.6 615.9 L750.8 617 L752 618.1 L753.1 619.3 L754.2 620.6 L755.2 621.9 L756.3 623.4 L757.2 624.8 L758.2 626.4 L759 628 L759.9 629.6 L760.7 631.3 L761.4 633.1 L762.1 634.9 L762.8 636.8 L763.4 638.7 L764 640.6 L764.5 642.6 L765 644.7 L765.4 646.7 L765.7 648.8 L766 651 L766.3 653.1 L766.5 655.3 L766.6 657.5 L766.7 659.7 L766.8 661.9 L766.8 664.2 L766.7 666.4 L766.6 668.7 L766.4 671 L766.2 673.2 L765.9 675.5 L765.6 677.8 L765.2 680 L764.7 682.3 L764.3 684.5 L763.7 686.7 L763.1 688.9 L762.5 691 L761.8 693.2 L761.1 695.3 L760.3 697.4 L759.5 699.4 L758.6 701.4 L757.7 703.4 L756.8 705.3 L755.8 707.2 L754.8 709.1 L753.7 710.8 L752.6 712.6 L751.4 714.3 L750.3 715.9 L749.1 717.5 L747.8 719 L746.6 720.4 L745.3 721.8 L744 723.1 L742.6 724.3 L741.3 725.5 L739.9 726.6 L738.5 727.7 L737.1 728.6 L735.7 729.5 L734.2 730.3 L732.8 731 L731.3 731.7 L729.8 732.3 L728.4 732.8 L726.9 733.2 L725.4 733.5 L723.9 733.8 L722.5 733.9 L721 734" fill="none" stroke="#333" stroke-width="1.2" stroke-linejoin="round"/>
<path d="M708.7 733.6 L707 732.7 L705.3 731.8 L703.7 730.6 L702.1 729.4 L700.6 728.1 L699.1 726.6 L697.6 725 L696.3 723.4 L695 721.6 L693.7 719.7 L692.5 717.7 L691.4 715.6 L690.4 713.4 L689.4 711.2 L688.5 708.9 L688.3 706.5 L688.2 704.2 L688.1 701.7 L688.1 699.2 L688.1 696.6 L688.1 694 L688.2 691.3 L688.3 688.5 L688.4 685.8 L688.7 682.9 L688.9 680.1 L689.2 677.2 L689.5 674.4 L689.9 671.5 L690.3 668.6 L690.7 665.7 L691.2 662.8 L691.7 659.9 L692.3 657.1 L692.9 654.2 L693.5 651.4 L694.1 648.7 L694.8 645.9 L695.5 643.2 L696.2 640.6 L697 638 L697.8 635.5 L698.6 633.1 L699.4 630.7 L700.3 628.4 L701.1 626.2 L702.1 624.1 L703.7 622.2 L705.3 620.3 L707 618.6 L708.7 617 L710.4 615.5 L712.2 614.1 L714 612.8 L715.9 611.7 L717.7 610.6 L719.6 609.7 L721.5 608.9 L723.3 608.3 L725.2 607.7" fill="none" stroke="#444" stroke-width="1" stroke-linejoin="round"/>
<ellipse cx="761.7" cy="700.2" rx="2" ry="2.8" transform="rotate(12 761.7 700.2)" fill="#fff" stroke="#262626" stroke-width="1.4"/>
<line x1="761.7" y1="700.2" x2="755.4" y2="703.8" stroke="#333" stroke-width="1.1"/>
<line x1="765.9" y1="695.3" x2="762.3" y2="691.8" stroke="#444" stroke-width="1"/>
<ellipse cx="743" cy="727.8" rx="2" ry="2.8" transform="rotate(12 743 727.8)" fill="#fff" stroke="#262626" stroke-width="1.4"/>
<line x1="743" y1="727.8" x2="737" y2="725.8" stroke="#333" stroke-width="1.1"/>
<line x1="747.9" y1="726.8" x2="746.4" y2="720.5" stroke="#444" stroke-width="1"/>
<ellipse cx="718.9" cy="737.5" rx="2" ry="2.8" transform="rotate(12 718.9 737.5)" fill="#fff" stroke="#262626" stroke-width="1.4"/>
<line x1="718.9" y1="737.5" x2="715" y2="730.7" stroke="#333" stroke-width="1.1"/>
<line x1="723" y1="740.8" x2="724.1" y2="733.7" stroke="#444" stroke-width="1"/>
<ellipse cx="697.1" cy="726.2" rx="2" ry="2.8" transform="rotate(12 697.1 726.2)" fill="#fff" stroke="#262626" stroke-width="1.4"/>
<line x1="697.1" y1="726.2" x2="696.6" y2="716.7" stroke="#333" stroke-width="1.1"/>
<line x1="699.1" y1="732.7" x2="702.4" y2="727.2" stroke="#444" stroke-width="1"/>
<ellipse cx="687.6" cy="698.1" rx="2" ry="2.8" transform="rotate(12 687.6 698.1)" fill="#fff" stroke="#262626" stroke-width="1.4"/>
<line x1="687.6" y1="698.1" x2="689.8" y2="688.8" stroke="#333" stroke-width="1.1"/>
<line x1="686.6" y1="705.7" x2="688.9" y2="703" stroke="#444" stroke-width="1"/>
<ellipse cx="691" cy="661.6" rx="2" ry="2.8" transform="rotate(12 691 661.6)" fill="#fff" stroke="#262626" stroke-width="1.4"/>
<line x1="691" y1="661.6" x2="694.1" y2="655.3" stroke="#333" stroke-width="1.1"/>
<line x1="688.9" y1="668.2" x2="690.8" y2="669.5" stroke="#444" stroke-width="1"/>
<ellipse cx="700.1" cy="627.4" rx="2" ry="2.8" transform="rotate(12 700.1 627.4)" fill="#fff" stroke="#262626" stroke-width="1.4"/>
<line x1="700.1" y1="627.4" x2="704.9" y2="626.4" stroke="#333" stroke-width="1.1"/>
<line x1="697.7" y1="630.8" x2="698.5" y2="635.7" stroke="#444" stroke-width="1"/>
<ellipse cx="720.9" cy="607.8" rx="2" ry="2.8" transform="rotate(12 720.9 607.8)" fill="#fff" stroke="#262626" stroke-width="1.4"/>
<line x1="720.9" y1="607.8" x2="726" y2="612.4" stroke="#333" stroke-width="1.1"/>
<line x1="716.1" y1="606.6" x2="716.3" y2="613.5" stroke="#444" stroke-width="1"/>
<ellipse cx="744.8" cy="608.6" rx="2" ry="2.8" transform="rotate(12 744.8 608.6)" fill="#fff" stroke="#262626" stroke-width="1.4"/>
<line x1="744.8" y1="608.6" x2="747.1" y2="617.1" stroke="#333" stroke-width="1.1"/>
<line x1="741.6" y1="603.5" x2="739.3" y2="610.1" stroke="#444" stroke-width="1"/>
<ellipse cx="762.7" cy="629.4" rx="2" ry="2.8" transform="rotate(12 762.7 629.4)" fill="#fff" stroke="#262626" stroke-width="1.4"/>
<line x1="762.7" y1="629.4" x2="761.4" y2="639.1" stroke="#333" stroke-width="1.1"/>
<line x1="762.1" y1="622" x2="758" y2="626.1" stroke="#444" stroke-width="1"/>
<ellipse cx="769" cy="663.5" rx="2" ry="2.8" transform="rotate(12 769 663.5)" fill="#fff" stroke="#262626" stroke-width="1.4"/>
<line x1="769" y1="663.5" x2="764.6" y2="671.4" stroke="#333" stroke-width="1.1"/>
<line x1="771.2" y1="656.3" x2="766.6" y2="656.6" stroke="#444" stroke-width="1"/>
<ellipse cx="708.4" cy="670.6" rx="19.4" ry="30" transform="rotate(10 708.4 670.6)" fill="#fff" stroke="#2a2a2a" stroke-width="1.3"/>
<ellipse cx="707.4" cy="670.6" rx="16.6" ry="27.4" transform="rotate(10 707.4 670.6)" fill="#fff" stroke="#333" stroke-width="1.3"/>
<ellipse cx="706.6" cy="670.8" rx="14" ry="24.6" transform="rotate(10 706.6 670.8)" fill="#ccc" stroke="#333" stroke-width="2"/>
<ellipse cx="709" cy="671.6" rx="11.4" ry="21" transform="rotate(10 709 671.6)" fill="#fff" stroke="#444" stroke-width="1.2"/>
<ellipse cx="711.4" cy="672" rx="8.4" ry="17.6" transform="rotate(10 711.4 672)" fill="none" stroke="#555" stroke-width="1"/>
<line x1="669.5" y1="666.6" x2="706" y2="671" stroke="#2a2a2a" stroke-width="1.2"/>
<line x1="612" y1="613.6" x2="648" y2="646.6" stroke="#1e1e1e" stroke-width="1.3"/>
<circle cx="605" cy="605.6" r="10.6" fill="#fff" stroke="#222" stroke-width="1.4"/>
<text x="605" y="609.7" text-anchor="middle" font-family="'Liberation Sans',sans-serif" font-weight="bold" font-size="11.5" fill="#222">1</text>
<text x="783.5" y="759.8" font-family="'Liberation Sans',sans-serif" font-size="6.6" fill="#555" textLength="60" lengthAdjust="spacingAndGlyphs">TRDHE0110052001</text>
</g>
<path d="M877.4 432 L877.4 449.2 L881.3 445.8 L883.9 451 L887 449.6 L884.6 444.4 L889.6 444.4 Z" fill="#fff" stroke="#b4b4b4" stroke-width="0.8"/>
<path d="M878 433.8 L878 447.6 L881.5 444.4 L884.2 449.9 L886.1 449 L883.5 443.4 L887.8 443.4 Z" fill="#0a0a0a"/>
</svg>
  </div>
  <div id="pshadow" class="abs"></div>
  <div id="dgap" class="abs"></div>
  <div id="dscroll" class="abs"></div>
  <div id="dthumb" class="abs"></div>
  <div id="bottom" class="abs"></div>
  <div class="edge" style="left:0"></div>
  <div class="edge" style="left:960px"></div>
</div>
</body>
</html>
